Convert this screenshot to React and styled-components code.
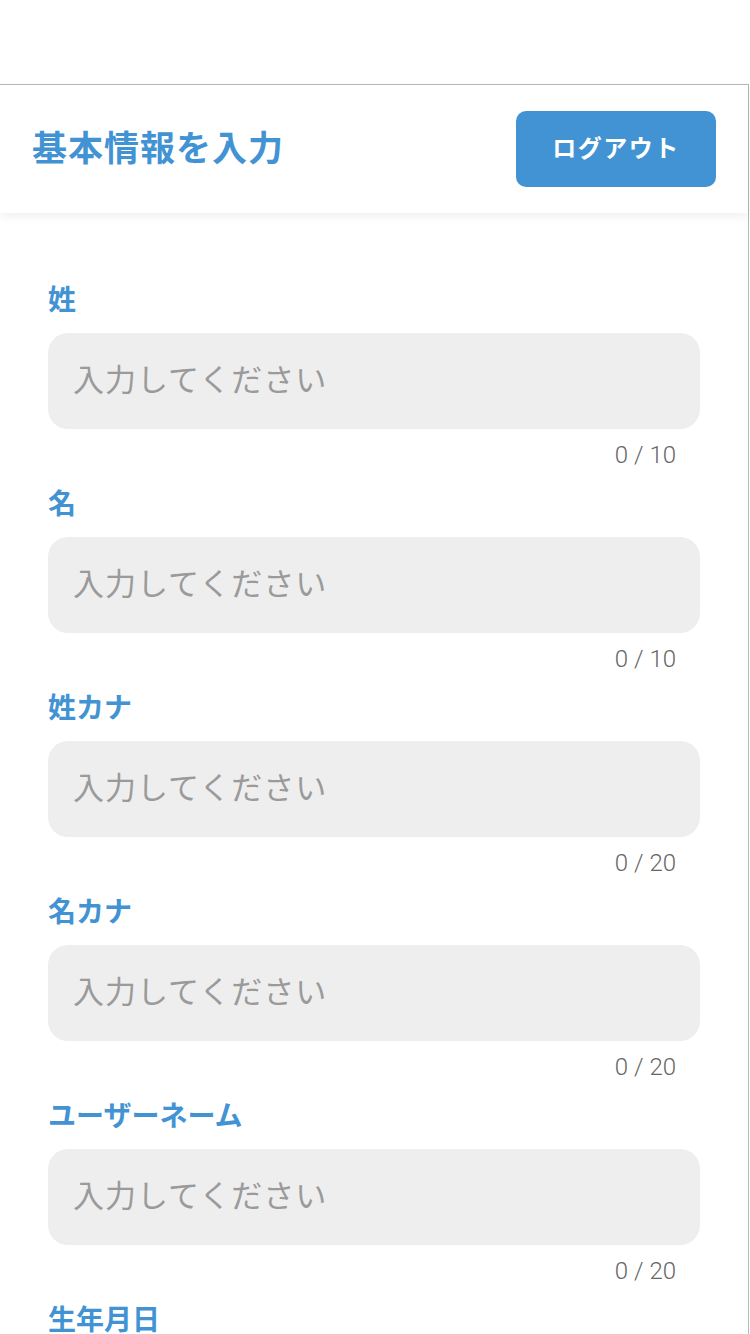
import React from 'react';
import styled, { createGlobalStyle } from 'styled-components';

const GlobalStyle = createGlobalStyle`
  html, body {
    margin: 0;
    padding: 0;
    background: #ffffff;
  }
  body {
    font-family: "Noto Sans CJK JP", "Noto Sans", sans-serif;
  }
  * {
    box-sizing: border-box;
  }
`;

const BLUE = '#4293d3';

const Page = styled.div`
  padding-top: 84px;
  width: 750px;
`;

const Panel = styled.div`
  width: 749px;
  border-top: 1px solid #b8b8b8;
  border-right: 1px solid #b8b8b8;
  min-height: 1250px;
`;

const Header = styled.header`
  height: 128px;
  display: flex;
  align-items: center;
  justify-content: space-between;
  padding: 0 32px;
  background: #ffffff;
  box-shadow: 0 3px 10px rgba(0, 0, 0, 0.07);
  position: relative;
`;

const Title = styled.h1`
  margin: 0 0 8px 0;
  font-size: 35px;
  font-weight: 700;
  color: ${BLUE};
  letter-spacing: 1px;
`;

const LogoutButton = styled.button`
  width: 200px;
  height: 76px;
  border: none;
  border-radius: 10px;
  background: ${BLUE};
  color: #ffffff;
  font-family: "Noto Sans CJK JP", sans-serif;
  font-size: 24px;
  font-weight: 700;
  letter-spacing: 1.5px;
  padding: 0 0 5px 0;
  cursor: pointer;
`;

const Form = styled.form`
  display: flex;
  flex-direction: column;
  padding: 66px 48px 0 48px;
`;

const Field = styled.div`
  display: flex;
  flex-direction: column;
  margin-bottom: 10px;
`;

const Label = styled.label`
  height: 40px;
  line-height: 38px;
  font-size: 28px;
  font-weight: 700;
  color: ${BLUE};
  margin-bottom: 14px;
`;

const Input = styled.input`
  height: 96px;
  width: 100%;
  border: none;
  outline: none;
  border-radius: 20px;
  background: #eeeeee;
  padding: 0 25px 7px 25px;
  font-family: "Noto Sans CJK JP", sans-serif;
  font-size: 31px;
  color: #333;
  letter-spacing: 1px;

  &::placeholder {
    color: #9a9a9a;
  }
`;

const Counter = styled.div`
  margin-top: 8px;
  height: 36px;
  line-height: 36px;
  text-align: right;
  padding-right: 24px;
  font-family: Roboto, "Noto Sans", sans-serif;
  font-size: 24px;
  font-weight: 300;
  color: #666666;
`;

const fields = [
  { label: '姓', max: 10 },
  { label: '名', max: 10 },
  { label: '姓カナ', max: 20 },
  { label: '名カナ', max: 20 },
  { label: 'ユーザーネーム', max: 20 },
];

export default function App() {
  return (
    <Page>
      <GlobalStyle />
      <Panel>
        <Header>
          <Title>基本情報を入力</Title>
          <LogoutButton type="button">ログアウト</LogoutButton>
        </Header>
        <Form onSubmit={(e) => e.preventDefault()}>
          {fields.map((f) => (
            <Field key={f.label}>
              <Label>{f.label}</Label>
              <Input placeholder="入力してください" maxLength={f.max} />
              <Counter>0 / {f.max}</Counter>
            </Field>
          ))}
          <Field>
            <Label>生年月日</Label>
          </Field>
        </Form>
      </Panel>
    </Page>
  );
}
